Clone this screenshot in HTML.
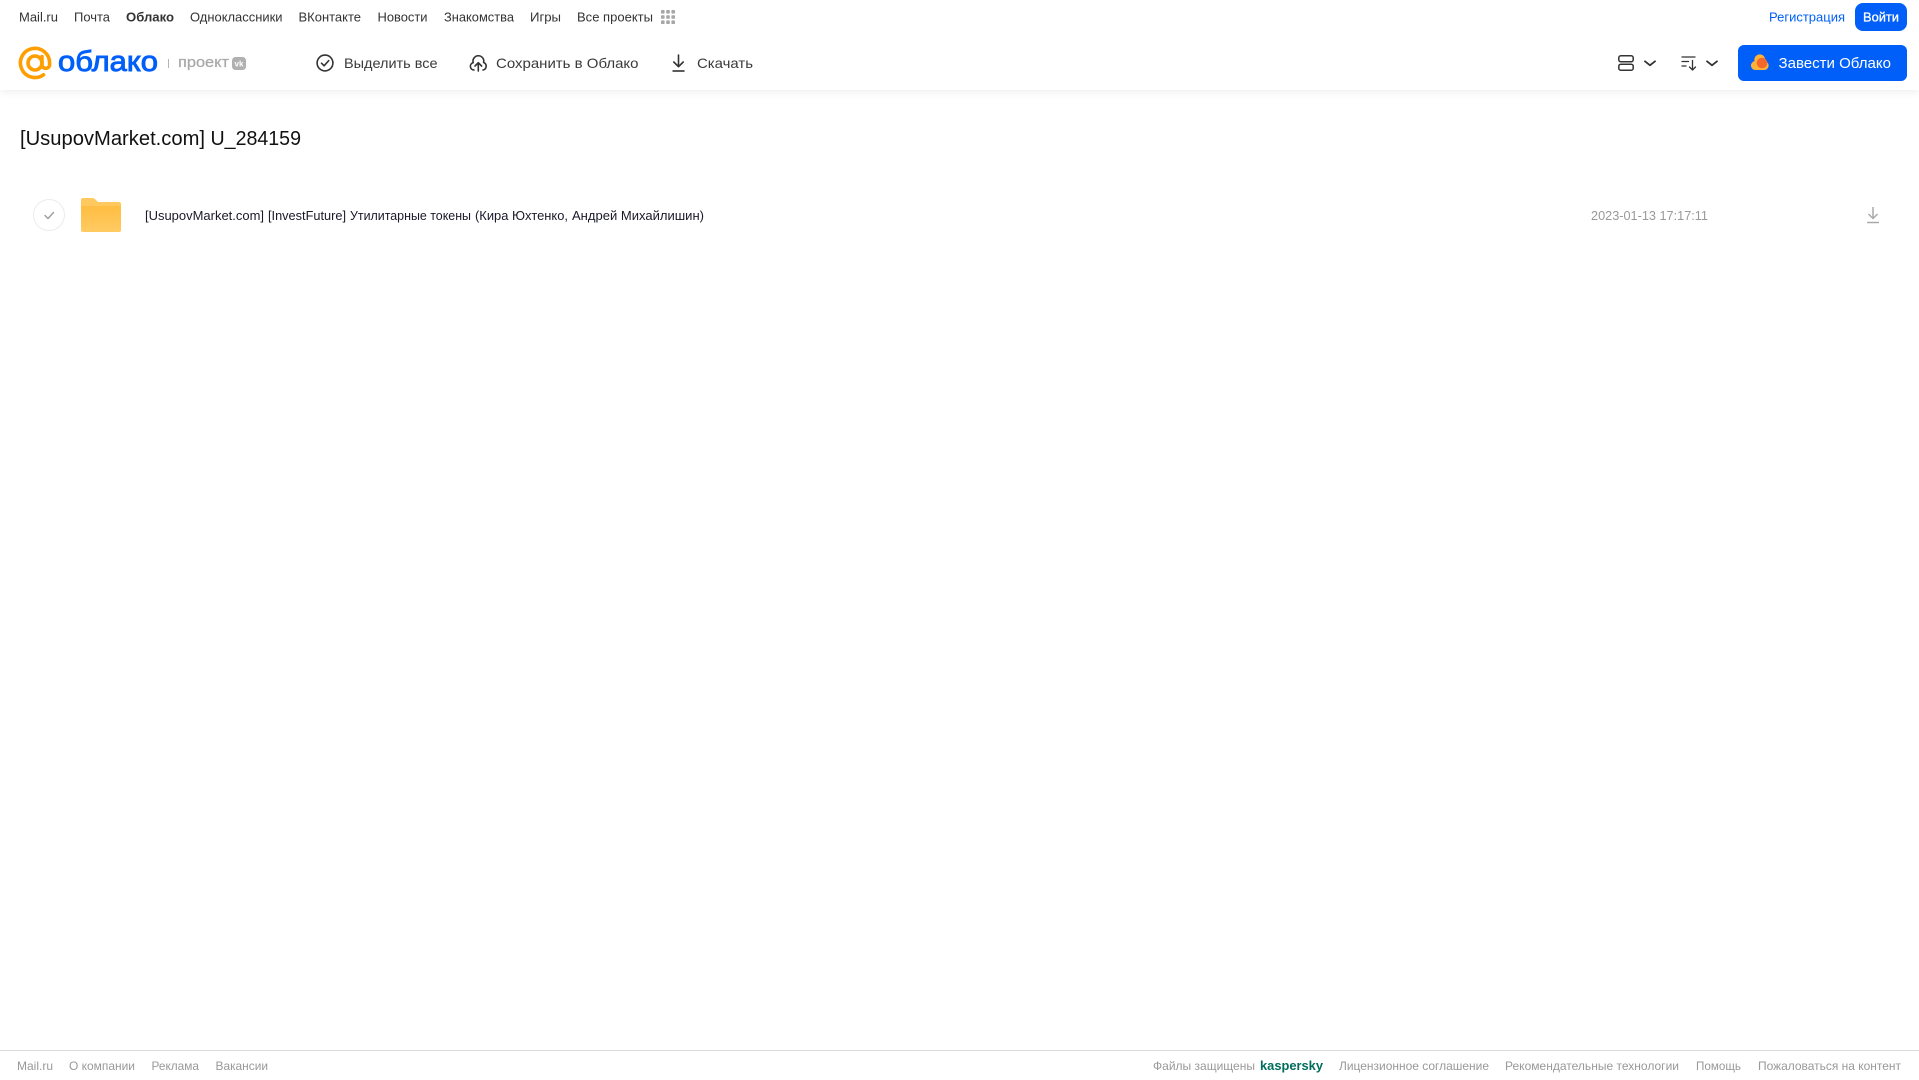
<!DOCTYPE html>
<html lang="ru">
<head>
<meta charset="utf-8">
<title>[UsupovMarket.com] U_284159</title>
<style>
html,body{margin:0;padding:0;width:1919px;height:1079px;overflow:hidden;background:#fff}
header,main,footer{position:absolute;left:0;width:1919px}
svg{display:block;position:absolute;left:0;top:0}
text{font-family:"Liberation Sans",Arial,sans-serif}
header{top:0;height:90px;background:#fff;box-shadow:0 2px 8px rgba(0,0,0,.07);z-index:2}
main{top:0;height:1050px;z-index:1}
footer{top:1050px;height:29px;border-top:1px solid #d9d9d9;box-sizing:border-box;background:#fff}
.n{font-size:13px;fill:#333}
.a{font-size:14px;fill:#3a3a3a}
.f{font-size:12px;fill:#999}
.t{font-size:13px;fill:#1a1a2a}
</style>
</head>
<body>
<header>
<svg width="1919" height="90" viewBox="0 0 1919 90">
  <text class="n" x="19" y="21.500" textLength="39" lengthAdjust="spacingAndGlyphs">Mail.ru</text>
  <text class="n" x="74" y="21.500" textLength="36" lengthAdjust="spacingAndGlyphs">Почта</text>
  <text class="n" x="126" y="21.500" textLength="48" lengthAdjust="spacingAndGlyphs" font-weight="700">Облако</text>
  <text class="n" x="190" y="21.500" textLength="92.500" lengthAdjust="spacingAndGlyphs">Одноклассники</text>
  <text class="n" x="298.500" y="21.500" textLength="62.500" lengthAdjust="spacingAndGlyphs">ВКонтакте</text>
  <text class="n" x="377.500" y="21.500" textLength="50" lengthAdjust="spacingAndGlyphs">Новости</text>
  <text class="n" x="444" y="21.500" textLength="70" lengthAdjust="spacingAndGlyphs">Знакомства</text>
  <text class="n" x="530" y="21.500" textLength="31" lengthAdjust="spacingAndGlyphs">Игры</text>
  <text class="n" x="577" y="21.500" textLength="76" lengthAdjust="spacingAndGlyphs">Все проекты</text>
  <g fill="#a6a6a6">
    <rect x="661" y="10" width="3.6" height="3.6" rx=".8"/><rect x="666.2" y="10" width="3.6" height="3.6" rx=".8"/><rect x="671.4" y="10" width="3.6" height="3.6" rx=".8"/>
    <rect x="661" y="15.2" width="3.6" height="3.6" rx=".8"/><rect x="666.2" y="15.2" width="3.6" height="3.6" rx=".8"/><rect x="671.4" y="15.2" width="3.6" height="3.6" rx=".8"/>
    <rect x="661" y="20.4" width="3.6" height="3.6" rx=".8"/><rect x="666.2" y="20.4" width="3.6" height="3.6" rx=".8"/><rect x="671.4" y="20.4" width="3.6" height="3.6" rx=".8"/>
  </g>

  <g fill="none" stroke="#ff9e00" stroke-width="3.6" stroke-linecap="round">
    <circle cx="35" cy="63" r="7"/>
    <path d="M42 56.5v8a3.8 3.8 0 0 0 7.6 0V63a14.6 14.6 0 1 0-6.1 11.8"/>
  </g>
  <text x="58" y="71" font-size="28.500" fill="#005ff9" stroke="#005ff9" stroke-width=".9" textLength="100" lengthAdjust="spacingAndGlyphs">облако</text>
  <rect x="168" y="59" width="1" height="9" fill="#b5b5b5"/>
  <text x="178" y="67" font-size="14.500" fill="#a9a9a9" stroke="#a9a9a9" stroke-width=".25" textLength="51" lengthAdjust="spacingAndGlyphs">проект</text>
  <rect x="232" y="57" width="14" height="13" rx="3.5" fill="#b0b0b0"/>
  <text x="234.500" y="66.500" font-size="8" font-weight="700" fill="#fff" textLength="9" lengthAdjust="spacingAndGlyphs">vk</text>

  <g fill="none" stroke="#333" stroke-width="1.600" stroke-linecap="round" stroke-linejoin="round">
    <circle cx="325" cy="63" r="7.900"/>
    <path d="M321.500 63.200l2.600 2.600 4.600-5.200"/>
    <path d="M474 70a3.700 3.700 0 0 1-.8-7.300A5.400 5.400 0 1 1 483.600 62.500a3.900 3.900 0 0 1-.6 7.500"/>
    <path d="M478.300 71V63M475 66l3.300-3.300 3.300 3.300"/>
    <path d="M678.500 55v11.500M673.800 62l4.700 4.700 4.700-4.700"/>
    <path d="M672.500 71h12" stroke-linecap="butt"/>
  </g>
  <text class="a" x="344" y="68" textLength="93.500" lengthAdjust="spacingAndGlyphs">Выделить все</text>
  <text class="a" x="496" y="68" textLength="142.500" lengthAdjust="spacingAndGlyphs">Сохранить в Облако</text>
  <text class="a" x="697" y="68" textLength="56" lengthAdjust="spacingAndGlyphs">Скачать</text>

  <g fill="none" stroke="#333" stroke-width="1.500" stroke-linecap="round" stroke-linejoin="round">
    <rect x="1618.800" y="55.800" width="14.400" height="6" rx="2"/>
    <rect x="1618.800" y="64.200" width="14.400" height="6" rx="2"/>
    <path d="M1645 61.300l5 4 5-4" stroke-width="1.800"/>
    <path d="M1682 57h13M1682 61.500h6.500M1682 66h4" stroke-width="1.300"/>
    <path d="M1692.500 60.500V70M1689.500 67l3 3 3-3" stroke-width="1.300"/>
    <path d="M1707 61.300l5 4 5-4" stroke-width="1.800"/>
  </g>

  <text x="1769" y="21.500" font-size="13" fill="#005ff9" textLength="76" lengthAdjust="spacingAndGlyphs">Регистрация</text>
  <rect x="1855" y="3" width="52" height="28" rx="8" fill="#005ff9"/>
  <text x="1863" y="21.500" font-size="13" fill="#fff" stroke="#fff" stroke-width=".3" textLength="36" lengthAdjust="spacingAndGlyphs">Войти</text>

  <rect x="1738" y="45" width="169" height="36" rx="6" fill="#005ff9"/>
  <path d="M1755.500 70a4.500 4.500 0 0 1-1-8.900A5.400 5.400 0 1 1 1765 61a4.600 4.600 0 0 1 0 9z" fill="#ffb236"/>
  <circle cx="1762" cy="63" r="5.300" fill="#f4682b"/>
  <text x="1778.500" y="68" font-size="14.500" fill="#fff" textLength="112.500" lengthAdjust="spacingAndGlyphs">Завести Облако</text>
</svg>
</header>

<main>
<svg width="1919" height="1050" viewBox="0 0 1919 1050">
  <text x="20" y="145" font-size="20" fill="#111" textLength="185" lengthAdjust="spacingAndGlyphs">[UsupovMarket.com]</text>
  <text x="210.500" y="145" font-size="20" fill="#111" textLength="90.500" lengthAdjust="spacingAndGlyphs">U_284159</text>

  <circle cx="49" cy="215" r="15.500" fill="#fff" stroke="#ececec"/>
  <path d="M45 215.500l3 3 5.500-6" fill="none" stroke="#999" stroke-width="1.300" stroke-linecap="round" stroke-linejoin="round"/>

  <defs>
    <linearGradient id="fg" x1="0" y1="0" x2="0" y2="1">
      <stop offset="0" stop-color="#ffbd42"/>
      <stop offset="1" stop-color="#ffcb63"/>
    </linearGradient>
  </defs>
  <path d="M83 198h9c1.600 0 2.800.7 3.800 1.900L98 202h21a2 2 0 0 1 2 2v4H81v-8a2 2 0 0 1 2-2z" fill="#ffc95f"/>
  <path d="M81 206h40v24a2 2 0 0 1-2 2H83a2 2 0 0 1-2-2z" fill="url(#fg)"/>

  <text class="t" x="145" y="220" textLength="119" lengthAdjust="spacingAndGlyphs">[UsupovMarket.com]</text>
  <text class="t" x="268" y="220" textLength="78" lengthAdjust="spacingAndGlyphs">[InvestFuture]</text>
  <text class="t" x="350" y="220" textLength="121" lengthAdjust="spacingAndGlyphs">Утилитарные токены</text>
  <text class="t" x="475" y="220" textLength="93" lengthAdjust="spacingAndGlyphs">(Кира Юхтенко,</text>
  <text class="t" x="572" y="220" textLength="132" lengthAdjust="spacingAndGlyphs">Андрей Михайлишин)</text>
  <text x="1591" y="220" font-size="12.500" fill="#999" textLength="117" lengthAdjust="spacingAndGlyphs">2023-01-13 17:17:11</text>

  <g fill="none" stroke="#aaa" stroke-width="1.500">
    <path d="M1873 207v11.500M1868.500 214l4.500 4.500 4.500-4.500"/>
    <path d="M1867 222.500h12"/>
  </g>
</svg>
</main>

<footer>
<svg width="1919" height="29" viewBox="0 1051 1919 29" style="top:0">
  <text class="f" x="17" y="1070" textLength="36" lengthAdjust="spacingAndGlyphs">Mail.ru</text>
  <text class="f" x="69" y="1070" textLength="66" lengthAdjust="spacingAndGlyphs">О компании</text>
  <text class="f" x="151.500" y="1070" textLength="47.500" lengthAdjust="spacingAndGlyphs">Реклама</text>
  <text class="f" x="215.500" y="1070" textLength="52.500" lengthAdjust="spacingAndGlyphs">Вакансии</text>
  <text class="f" x="1153" y="1070" textLength="102" lengthAdjust="spacingAndGlyphs">Файлы защищены</text>
  <text x="1260" y="1070" font-size="13" font-weight="700" fill="#006d5c" textLength="63" lengthAdjust="spacingAndGlyphs">kaspersky</text>
  <text class="f" x="1339" y="1070" textLength="150" lengthAdjust="spacingAndGlyphs">Лицензионное соглашение</text>
  <text class="f" x="1505" y="1070" textLength="174" lengthAdjust="spacingAndGlyphs">Рекомендательные технологии</text>
  <text class="f" x="1696" y="1070" textLength="45" lengthAdjust="spacingAndGlyphs">Помощь</text>
  <text class="f" x="1758" y="1070" textLength="143" lengthAdjust="spacingAndGlyphs">Пожаловаться на контент</text>
</svg>
</footer>
</body>
</html>
